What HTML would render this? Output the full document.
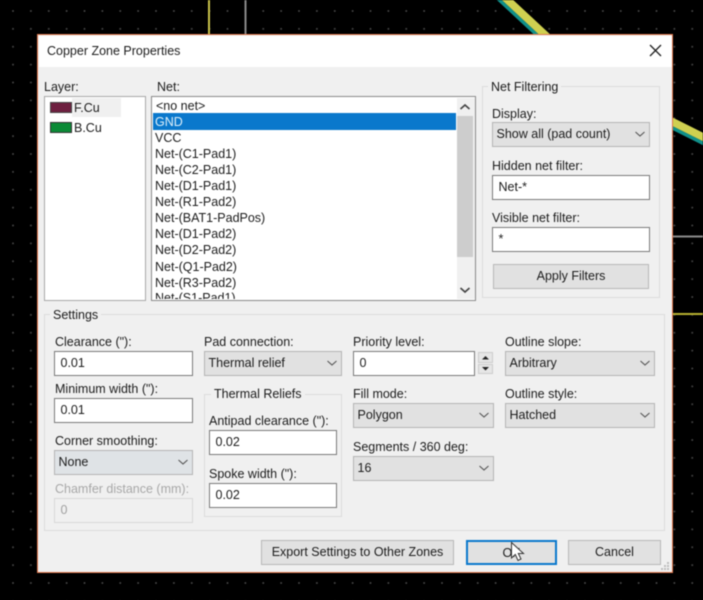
<!DOCTYPE html>
<html><head><meta charset="utf-8"><style>
html,body{margin:0;padding:0;background:#000}
#r{position:relative;width:703px;height:600px;overflow:hidden;background-color:#000;font-family:"Liberation Sans",sans-serif;font-size:12.5px;color:#1c1c1c;filter:blur(.5px)}
#g{position:absolute;left:0;top:0;width:703px;height:600px;background-image:radial-gradient(circle at 1px 1px,#4a4a4a 0,#4a4a4a .7px,transparent 1.1px);background-size:17.88px 17.89px;background-position:12px 10px}
.a{position:absolute;box-sizing:border-box}
.t{position:absolute;white-space:nowrap;line-height:16px;height:16px}
.i{position:absolute;box-sizing:border-box;background:#fff;border:1.5px solid #7a7a7a;line-height:22px;padding-left:5.5px;white-space:nowrap}
.c{position:absolute;box-sizing:border-box;background:#e1e1e1;border:1.5px solid #b4b4b4;line-height:23.5px;padding-left:3.5px;white-space:nowrap}
.c svg{position:absolute;right:3px;top:7px}
.b{position:absolute;box-sizing:border-box;background:#e1e1e1;border:1.5px solid #b8b8b8;text-align:center;line-height:23px;white-space:nowrap}
.gr{position:absolute;box-sizing:border-box;border:1px solid #dcdcdc}
.l{background:#f0f0f0;padding:0 3px}
</style></head><body><div id="r">
<div id="g"></div>
<svg class="a" style="left:0;top:0" width="703" height="600">
<line x1="209" y1="0" x2="209" y2="36" stroke="#c9c34a" stroke-width="2"/>
<line x1="245.500" y1="0" x2="245.500" y2="36" stroke="#8a8a8a" stroke-width="2"/>
<line x1="495.100" y1="-4" x2="546.200" y2="43.600" stroke="#10908a" stroke-width="3.500"/>
<line x1="498.900" y1="-8.100" x2="550" y2="39.500" stroke="#cfd050" stroke-width="7.700"/>
<line x1="663.300" y1="123.400" x2="708.300" y2="145.900" stroke="#10908a" stroke-width="3.500"/>
<line x1="665.800" y1="118.400" x2="710.800" y2="140.900" stroke="#cfd050" stroke-width="7.700"/>
<line x1="670" y1="236.500" x2="703" y2="236.500" stroke="#8a8a8a" stroke-width="2"/>
<line x1="670" y1="314" x2="703" y2="314" stroke="#b5b030" stroke-width="2"/>
</svg>
<div class="a" style="left:37px;top:34px;width:636px;height:539px;background:#f0f0f0;border:1.5px solid #e0764a"></div>
<div class="a" style="left:39px;top:36px;width:633px;height:31px;background:#fff"></div>
<div class="t" style="left:47px;top:43px">Copper Zone Properties</div>
<svg class="a" style="left:649px;top:44px" width="13" height="13"><path d="M1 1L12 12M12 1L1 12" stroke="#222" stroke-width="1.300" fill="none"/></svg>

<div class="t" style="left:44px;top:79px">Layer:</div>
<div class="a" style="left:44px;top:96px;width:102px;height:205px;background:#fff;border:1.5px solid #a8a8a8"></div>
<div class="a" style="left:72px;top:98px;width:49px;height:19px;background:#f0f0f0"></div>
<div class="a" style="left:50px;top:102px;width:22px;height:11px;background:#6e2040;border:1px solid #444"></div>
<div class="t" style="left:74px;top:100px">F.Cu</div>
<div class="a" style="left:50px;top:122px;width:22px;height:11px;background:#0b8a36;border:1px solid #333"></div>
<div class="t" style="left:74px;top:120px">B.Cu</div>

<div class="t" style="left:157px;top:79px">Net:</div>
<div class="a" style="left:151px;top:96px;width:325px;height:205px;background:#fff;border:1.5px solid #8a8a8a;overflow:hidden"></div>
<div class="a" style="left:153px;top:113px;width:303px;height:17px;background:#0a78cc"></div>
<div class="t" style="left:156px;top:98px">&lt;no net&gt;</div>
<div class="t" style="left:155px;top:114px;color:#dff0fa">GND</div>
<div class="t" style="left:155px;top:130px">VCC</div>
<div class="t" style="left:155px;top:146px">Net-(C1-Pad1)</div>
<div class="t" style="left:155px;top:162px">Net-(C2-Pad1)</div>
<div class="t" style="left:155px;top:178px">Net-(D1-Pad1)</div>
<div class="t" style="left:155px;top:194px">Net-(R1-Pad2)</div>
<div class="t" style="left:155px;top:210px">Net-(BAT1-PadPos)</div>
<div class="t" style="left:155px;top:226px">Net-(D1-Pad2)</div>
<div class="t" style="left:155px;top:242px">Net-(D2-Pad2)</div>
<div class="t" style="left:155px;top:259px">Net-(Q1-Pad2)</div>
<div class="t" style="left:155px;top:275px">Net-(R3-Pad2)</div>
<div class="a" style="left:153px;top:291px;width:303px;height:8px;overflow:hidden"><div class="t" style="left:2px;top:-1px">Net-(S1-Pad1)</div></div>
<div class="a" style="left:457px;top:98px;width:18px;height:201px;background:#f0f0f0"></div>
<div class="a" style="left:457px;top:116px;width:16px;height:141px;background:#cdcdcd"></div>
<svg class="a" style="left:459px;top:103px" width="12" height="8"><path d="M1.500 6L6 2L10.500 6" stroke="#444" stroke-width="1.600" fill="none"/></svg>
<svg class="a" style="left:459px;top:286px" width="12" height="8"><path d="M1.500 2L6 6L10.500 2" stroke="#444" stroke-width="1.600" fill="none"/></svg>

<div class="gr" style="left:482px;top:86px;width:178px;height:212px"></div>
<div class="t l" style="left:488px;top:79px">Net Filtering</div>
<div class="t" style="left:492px;top:106px">Display:</div>
<div class="c" style="left:492px;top:122px;width:158px;height:25px">Show all (pad count)<svg width="12" height="8"><path d="M1.500 2L6 6L10.500 2" stroke="#555" stroke-width="1.100" fill="none"/></svg></div>
<div class="t" style="left:492px;top:158px">Hidden net filter:</div>
<div class="i" style="left:492px;top:175px;width:158px;height:25px">Net-*</div>
<div class="t" style="left:492px;top:210px">Visible net filter:</div>
<div class="i" style="left:492px;top:227px;width:158px;height:25px">*</div>
<div class="b" style="left:493px;top:264px;width:156px;height:25px">Apply Filters</div>

<div class="gr" style="left:44px;top:314px;width:621px;height:217px"></div>
<div class="t l" style="left:50px;top:307px">Settings</div>
<div class="t" style="left:55px;top:334px">Clearance ("):</div>
<div class="i" style="left:54px;top:351px;width:139px;height:25px">0.01</div>
<div class="t" style="left:55px;top:381px">Minimum width ("):</div>
<div class="i" style="left:54px;top:398px;width:139px;height:25px">0.01</div>
<div class="t" style="left:55px;top:433px">Corner smoothing:</div>
<div class="c" style="left:54px;top:450px;width:139px;height:25px;background:#dfe3e6">None<svg width="12" height="8"><path d="M1.500 2L6 6L10.500 2" stroke="#555" stroke-width="1.100" fill="none"/></svg></div>
<div class="t" style="left:55px;top:481px;color:#a8a8a8">Chamfer distance (mm):</div>
<div class="i" style="left:54px;top:498px;width:139px;height:25px;background:#f0f0f0;border-color:#d8d8d8;color:#a0a0a0">0</div>

<div class="t" style="left:204px;top:334px">Pad connection:</div>
<div class="c" style="left:204px;top:351px;width:138px;height:25px">Thermal relief<svg width="12" height="8"><path d="M1.500 2L6 6L10.500 2" stroke="#555" stroke-width="1.100" fill="none"/></svg></div>
<div class="gr" style="left:204px;top:394px;width:138px;height:123px"></div>
<div class="t l" style="left:211px;top:386px">Thermal Reliefs</div>
<div class="t" style="left:209px;top:413px">Antipad clearance ("):</div>
<div class="i" style="left:209px;top:430px;width:128px;height:25px">0.02</div>
<div class="t" style="left:209px;top:466px">Spoke width ("):</div>
<div class="i" style="left:209px;top:483px;width:128px;height:25px">0.02</div>

<div class="t" style="left:353px;top:334px">Priority level:</div>
<div class="i" style="left:353px;top:351px;width:122px;height:25px">0</div>
<div class="a" style="left:478px;top:352px;width:15px;height:11px;background:#e6e6e6;border:1px solid #ccc"></div>
<div class="a" style="left:478px;top:364px;width:15px;height:10px;background:#e6e6e6;border:1px solid #ccc"></div>
<svg class="a" style="left:478px;top:352px" width="15" height="22"><path d="M4 7.500L7.500 4L11 7.500ZM4 15L7.500 18.500L11 15Z" fill="#222"/></svg>
<div class="t" style="left:353px;top:386px">Fill mode:</div>
<div class="c" style="left:353px;top:403px;width:141px;height:25px">Polygon<svg width="12" height="8"><path d="M1.500 2L6 6L10.500 2" stroke="#555" stroke-width="1.100" fill="none"/></svg></div>
<div class="t" style="left:353px;top:439px">Segments / 360 deg:</div>
<div class="c" style="left:353px;top:456px;width:141px;height:25px">16<svg width="12" height="8"><path d="M1.500 2L6 6L10.500 2" stroke="#555" stroke-width="1.100" fill="none"/></svg></div>

<div class="t" style="left:505px;top:334px">Outline slope:</div>
<div class="c" style="left:505px;top:351px;width:150px;height:25px">Arbitrary<svg width="12" height="8"><path d="M1.500 2L6 6L10.500 2" stroke="#555" stroke-width="1.100" fill="none"/></svg></div>
<div class="t" style="left:505px;top:386px">Outline style:</div>
<div class="c" style="left:505px;top:403px;width:150px;height:25px">Hatched<svg width="12" height="8"><path d="M1.500 2L6 6L10.500 2" stroke="#555" stroke-width="1.100" fill="none"/></svg></div>

<div class="b" style="left:261px;top:540px;width:193px;height:25px">Export Settings to Other Zones</div>
<div class="b" style="left:466px;top:540px;width:91px;height:25px;border:2px solid #0a78cc;line-height:22px">OK</div>
<div class="b" style="left:568px;top:540px;width:93px;height:25px">Cancel</div>
<svg class="a" style="left:510px;top:541px" width="16" height="22"><path d="M1.500 1.500V17L5.300 13.500L8 19.500L11 18L8.300 12.500H13.500Z" fill="#fff" stroke="#333" stroke-width="1"/></svg>
<svg class="a" style="left:660px;top:561px" width="10" height="10"><path d="M7 1h2v2H7zM4 4h2v2H4zM7 4h2v2H7zM1 7h2v2H1zM4 7h2v2H4zM7 7h2v2H7z" fill="#bdbdbd"/></svg>
</div></body></html>
